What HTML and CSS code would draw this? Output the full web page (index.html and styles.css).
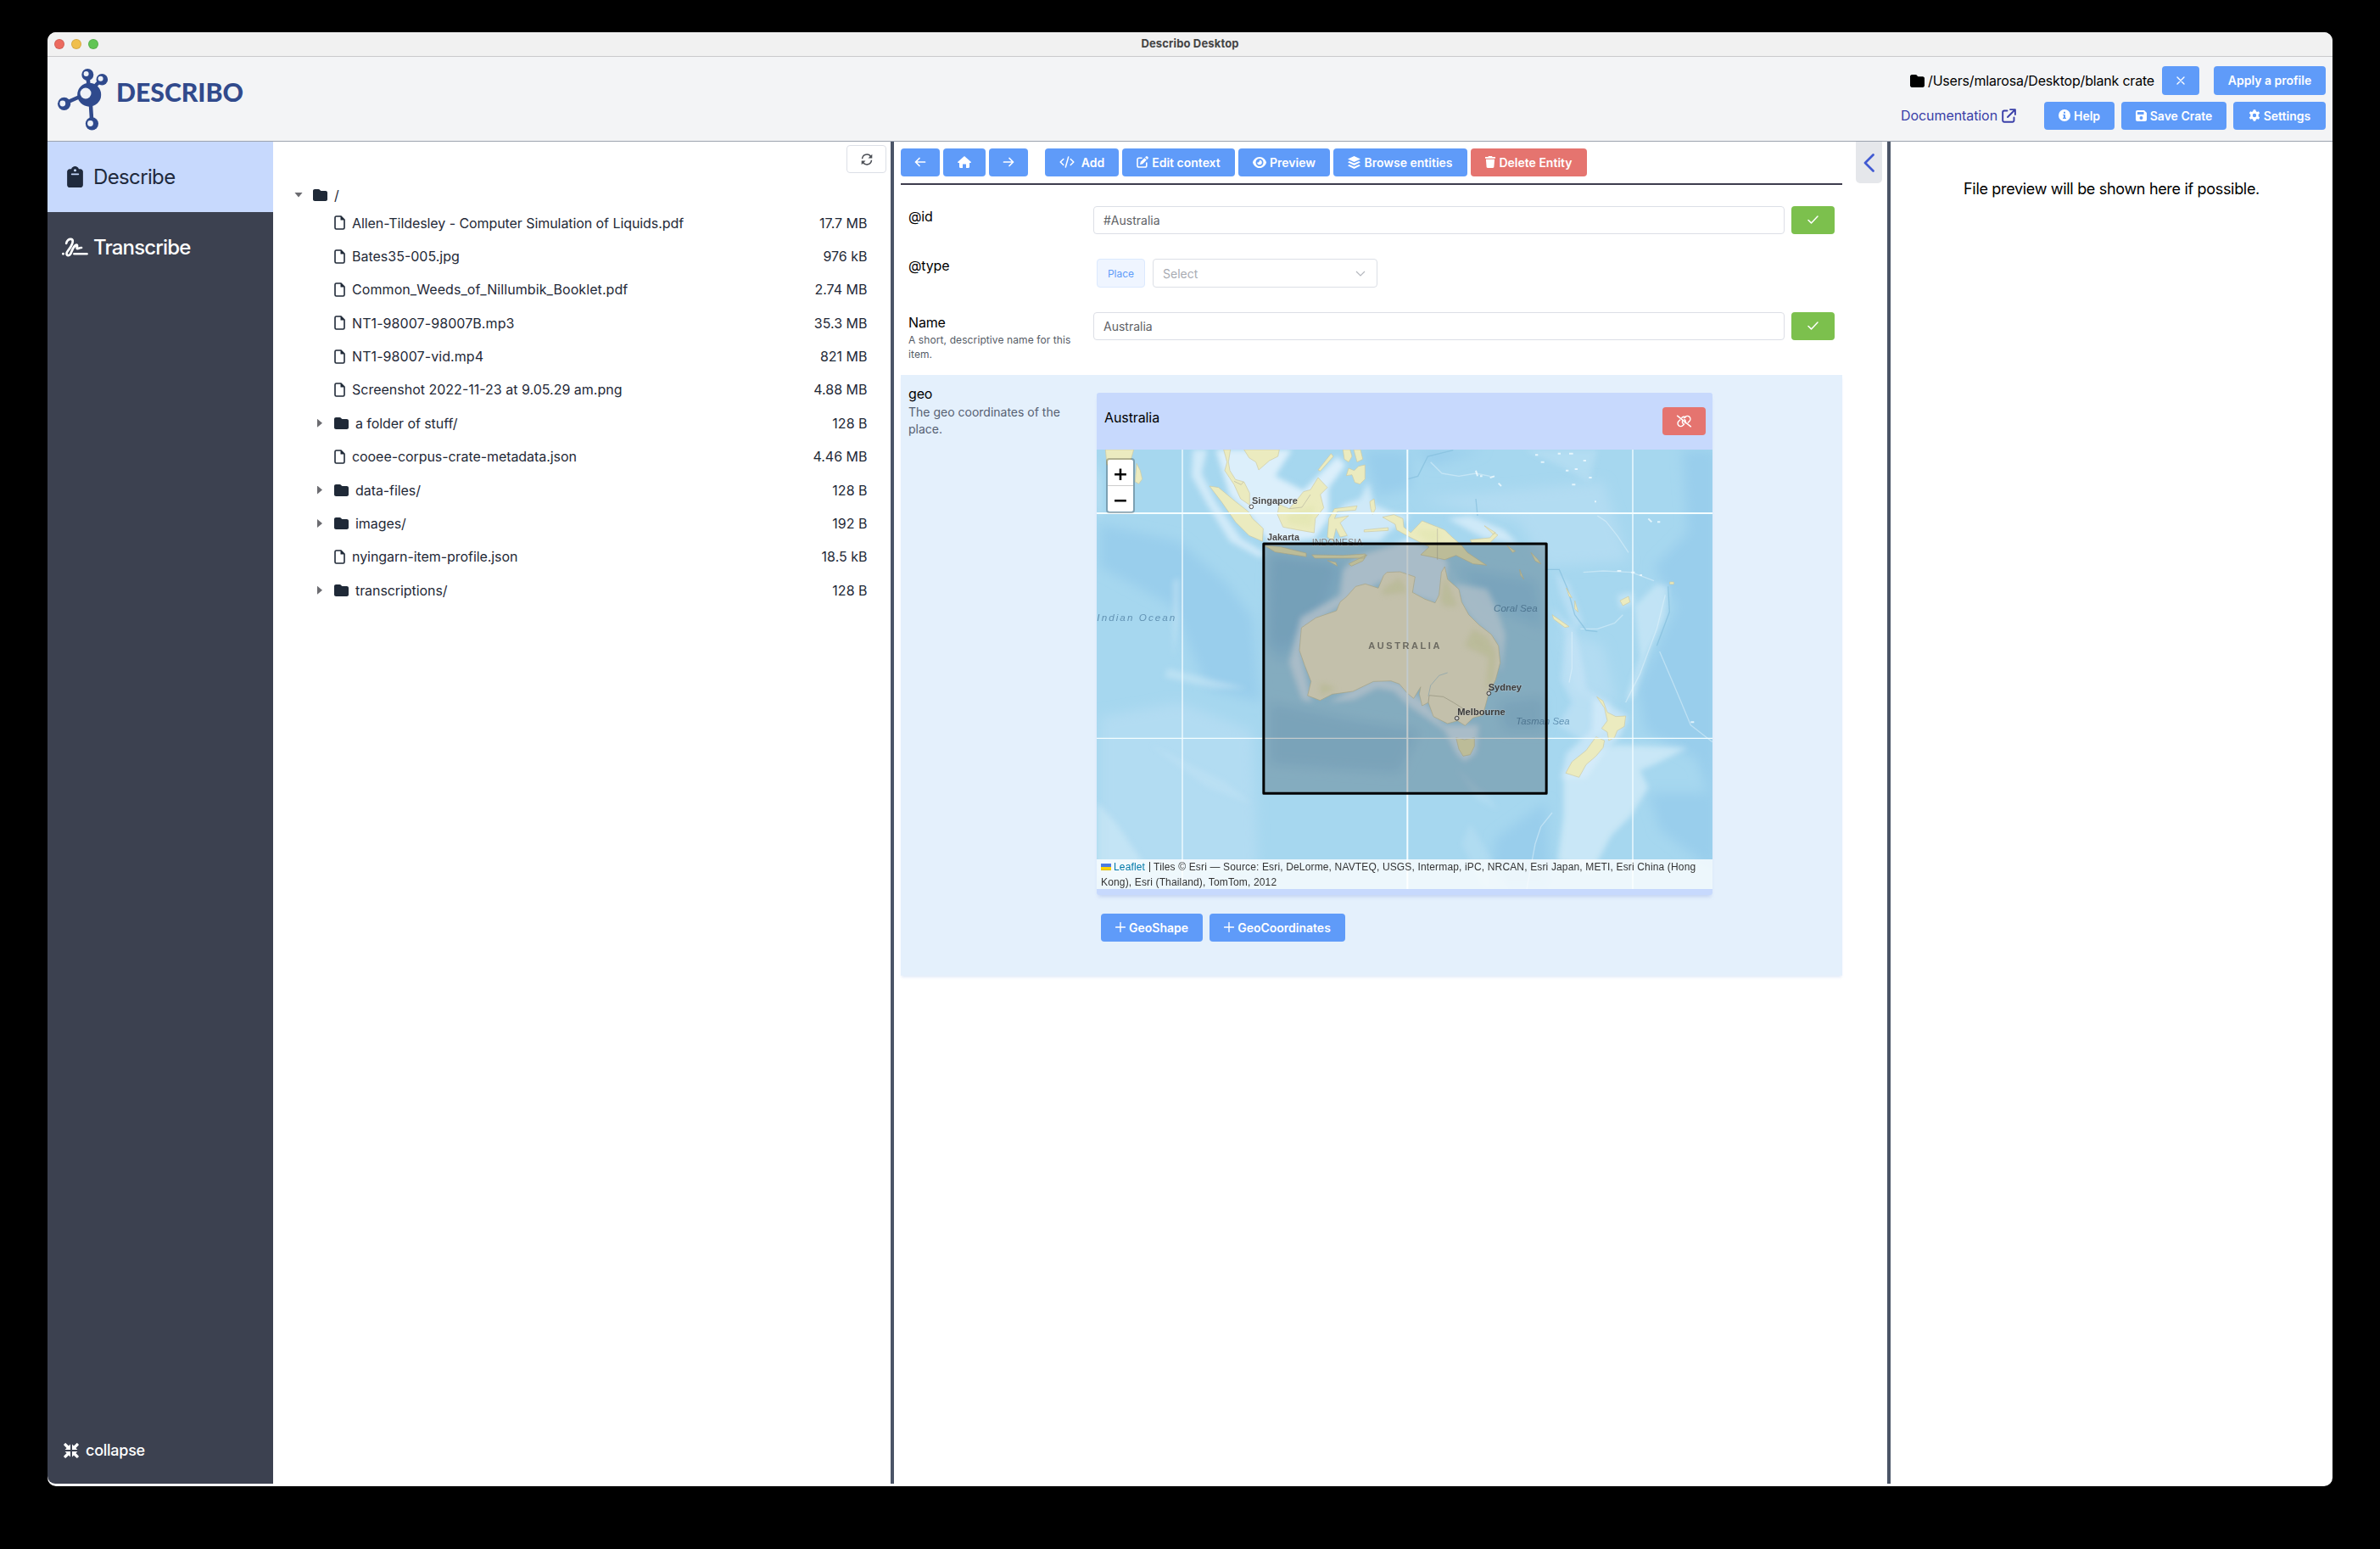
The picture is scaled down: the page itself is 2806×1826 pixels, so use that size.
FILE: index.html
```html
<!DOCTYPE html>
<html lang="en">
<head>
<meta charset="utf-8">
<title>Describo Desktop</title>
<link rel="stylesheet" href="styles.css">
</head>
<body>
<svg class="sprite" aria-hidden="true">
  <symbol id="i-folder" viewBox="0 32 512 448" preserveAspectRatio="none"><path d="M64 480H448c35.300 0 64-28.700 64-64V160c0-35.300-28.700-64-64-64H288c-10.100 0-19.600-4.700-25.600-12.800L243.200 57.600C231.100 41.500 212.100 32 192 32H64C28.700 32 0 60.700 0 96V416c0 35.300 28.700 64 64 64z"/></symbol>
  <symbol id="i-file" viewBox="0 0 13 17"><path d="M2.500 1H8l4 4v9.500a1.500 1.500 0 0 1-1.500 1.500h-8A1.500 1.500 0 0 1 1 14.500v-12A1.500 1.500 0 0 1 2.500 1z" fill="none" stroke="currentColor" stroke-width="1.600"/><path d="M7.500 1v4.500H12L8 1z"/></symbol>
  <symbol id="i-clipboard" viewBox="0 0 384 512"><path fill-rule="evenodd" d="M192 0c-41.800 0-77.400 26.700-90.500 64H64C28.700 64 0 92.700 0 128V448c0 35.300 28.700 64 64 64H320c35.300 0 64-28.700 64-64V128c0-35.300-28.700-64-64-64H282.500C269.400 26.700 233.800 0 192 0zm0 64a32 32 0 1 1 0 64 32 32 0 1 1 0-64zM112 176H272a16 16 0 0 1 0 32H112a16 16 0 0 1 0-32z"/></symbol>
  <symbol id="i-signature" viewBox="0 0 30 22"><g fill="none" stroke="currentColor" stroke-width="2.600" stroke-linecap="round" stroke-linejoin="round"><path d="M5 6.500c.5-3.200 3-5.200 5.500-4.800C13.500 2.200 12.500 6.500 10 10.500 8 14 5.300 16 5.300 18.300c.2 2.500 3.300 2.600 4.500.3C11.200 16 12 11.500 15.500 8.700c1.500-1.200 2.300-.2 1.900 1.300-.4 1.400-.9 2.900.9 2.500 1.400-.3 2.300-1.300 4-1"/><path d="M14 18.500H28.500"/></g><circle cx="1.400" cy="18.500" r="1.400"/></symbol>
  <symbol id="i-refresh" viewBox="0 0 14 14"><g fill="none" stroke="currentColor" stroke-width="1.500"><path d="M1.500 6.300A5.500 5.500 0 0 1 11.800 4"/><path d="M12.500 7.700A5.500 5.500 0 0 1 2.200 10"/></g><path d="M13.300.8v4.800H8.500zM.7 13.200V8.400h4.800z"/></symbol>
  <symbol id="i-left" viewBox="0 0 14 14"><path d="M12.500 7H1.500M6 2.500 1.500 7 6 11.500" fill="none" stroke="currentColor" stroke-width="1.700" stroke-linecap="round" stroke-linejoin="round"/></symbol>
  <symbol id="i-right" viewBox="0 0 14 14"><path d="M1.500 7h11M8 2.500 12.500 7 8 11.500" fill="none" stroke="currentColor" stroke-width="1.700" stroke-linecap="round" stroke-linejoin="round"/></symbol>
  <symbol id="i-home" viewBox="0 0 16 14"><path d="M8 0 .3 6.700c-.5.500-.2 1.300.5 1.300H2v4.800c0 .7.500 1.200 1.200 1.200H6V9.500h4V14h2.800c.7 0 1.200-.5 1.200-1.200V8h1.200c.7 0 1-.8.500-1.300z"/></symbol>
  <symbol id="i-code" viewBox="0 0 18 14"><path d="M4.800 3.500 1.200 7l3.600 3.500M13.200 3.500 16.800 7l-3.600 3.500M10.700 1 7.300 13" fill="none" stroke="currentColor" stroke-width="1.500" stroke-linecap="round" stroke-linejoin="round"/></symbol>
  <symbol id="i-edit" viewBox="0 0 14 14"><path d="M6 2.200H2.800A1.800 1.800 0 0 0 1 4v7.200A1.800 1.800 0 0 0 2.800 13H10a1.800 1.800 0 0 0 1.800-1.800V8" fill="none" stroke="currentColor" stroke-width="1.600" stroke-linecap="round"/><path d="m11 .6c.6-.6 1.300-.6 1.900 0l.5.500c.6.600.6 1.300 0 1.900l-.9.900L10.100 1.500zM9.400 2.200l2.400 2.400-4.600 4.600-3.200.8.800-3.200z"/></symbol>
  <symbol id="i-eye" viewBox="0 0 16 13"><path fill-rule="evenodd" d="M8 0C3.600 0 .9 3.600.1 6.100a1 1 0 0 0 0 .8C.9 9.400 3.600 13 8 13s7.100-3.600 7.900-6.100a1 1 0 0 0 0-.8C15.100 3.600 12.400 0 8 0zm0 2a4.500 4.500 0 1 0 0 9 4.500 4.500 0 0 0 0-9z"/><path d="M8 3.700A2.800 2.800 0 1 1 5.200 6.500C6.500 6.900 8.300 5.500 8 3.700z"/></symbol>
  <symbol id="i-layers" viewBox="0 0 15 15"><path d="M7.500 0 15 3.500 7.500 7 0 3.500z"/><path d="M1.800 6 7.500 8.600 13.200 6 15 7.300 7.500 10.900 0 7.300z"/><path d="m1.800 10 5.700 2.600L13.200 10l1.800 1.300-7.500 3.600L0 11.300z"/></symbol>
  <symbol id="i-trash" viewBox="0 0 12 14"><path d="M4 0h4l.6 1H12v1.800H0V1h3.400zM.9 3.700h10.200l-.7 9.100c0 .7-.6 1.200-1.300 1.200H2.900c-.7 0-1.300-.5-1.300-1.200z"/></symbol>
  <symbol id="i-info" viewBox="0 0 14 14"><path fill-rule="evenodd" d="M7 0a7 7 0 1 0 0 14A7 7 0 0 0 7 0zM6 2.800h2v2H6zM5.200 6H8v3.800h1v1.300H5V9.800h1V7.300h-.8z"/></symbol>
  <symbol id="i-save" viewBox="0 0 13 13"><path fill-rule="evenodd" d="M2 0h8l3 3v8a2 2 0 0 1-2 2H2a2 2 0 0 1-2-2V2a2 2 0 0 1 2-2zm0 2v3h7.500V2zm4.500 5a2 2 0 1 0 0 4 2 2 0 0 0 0-4z"/></symbol>
  <symbol id="i-gear" viewBox="0 0 14 14"><path fill-rule="evenodd" d="M5.700.2h2.600l.4 1.900 1.300.8 1.900-.7 1.300 2.300-1.500 1.300v2.400l1.500 1.300-1.300 2.300-1.900-.7-1.300.8-.4 1.900H5.700l-.4-1.900-1.300-.8-1.900.7L.8 9.500l1.500-1.300V5.800L.8 4.500l1.300-2.300 1.900.7 1.300-.8zM7 4.800a2.200 2.200 0 1 0 0 4.400 2.200 2.200 0 0 0 0-4.400z"/></symbol>
  <symbol id="i-external" viewBox="0 0 17 17"><path d="M6.500 2.500H3A1.800 1.800 0 0 0 1.200 4.300V14A1.800 1.800 0 0 0 3 15.800h9.700a1.800 1.800 0 0 0 1.800-1.800v-3.500M10 1.100h5.900V7M15.500 1.500 7 10" fill="none" stroke="currentColor" stroke-width="1.900" stroke-linecap="round" stroke-linejoin="round"/></symbol>
  <symbol id="i-x" viewBox="0 0 10 10"><path d="m1 1 8 8M9 1 1 9" fill="none" stroke="currentColor" stroke-width="1.400" stroke-linecap="round"/></symbol>
  <symbol id="i-check" viewBox="0 0 13 10"><path d="m1 5.500 3.500 3.400L12 1" fill="none" stroke="currentColor" stroke-width="1.500" stroke-linecap="round" stroke-linejoin="round"/></symbol>
  <symbol id="i-plus" viewBox="0 0 12 12"><path d="M6 .6v10.800M.6 6h10.800" fill="none" stroke="currentColor" stroke-width="1.400" stroke-linecap="round"/></symbol>
  <symbol id="i-unlink" viewBox="0 0 18 14"><g fill="none" stroke="currentColor" stroke-width="1.400" stroke-linecap="round"><path d="M1.500 1 16.500 13"/><path d="M6.500 3.200C7.500 1.800 9.500 1.500 10.700 2.500M8 9.800c-1-1-1.200-2.400-.7-3.500"/><path d="M9.500 5.300c1.400 1 1.400 2.700.6 3.800"/><path d="M4.500 5.500 3 7a3.300 3.300 0 0 0 4.600 4.800L9 10.500M9 3.500l1.400-1.300A3.300 3.300 0 0 1 15 7l-1.500 1.500"/></g></symbol>
  <symbol id="i-compress" viewBox="0 0 18 18"><path id="arm" d="M8 8H1.600L3.600 6 .4 2.800C0 2.400 0 2 .4 1.600L1.600.4C2 0 2.400 0 2.800.4L6 3.600l2-2z"/><use href="#arm" transform="matrix(-1 0 0 1 18 0)"/><use href="#arm" transform="matrix(1 0 0 -1 0 18)"/><use href="#arm" transform="rotate(180 9 9)"/></symbol>
</svg>

<div class="window">
  <header class="titlebar">
    <span class="light red"></span><span class="light yellow"></span><span class="light green"></span>
    <h1 class="window-title">Describo Desktop</h1>
  </header>

  <div class="topbar">
    <svg class="logo" viewBox="0 0 230 80">
      <g stroke="#314a8c" stroke-width="4.500"><path d="M43.200 37 41.300 16M43.200 37 57 22M43.200 37 14 50M44 37 46.400 74" /></g>
      <g fill="#2f4a8d"><circle cx="43.200" cy="39.700" r="14"/><circle cx="41.300" cy="16" r="7"/><circle cx="58.300" cy="21.700" r="6.800"/><circle cx="13.600" cy="50.300" r="7.600"/><circle cx="46.400" cy="73.800" r="7.600"/></g>
      <g fill="#eef2f8"><circle cx="39" cy="38" r="6.500"/><circle cx="39.600" cy="15" r="3"/><circle cx="56.600" cy="20.700" r="3"/><circle cx="11.800" cy="50" r="3.400"/><circle cx="44.500" cy="73.500" r="3.400"/></g>
      <text class="logo-text" x="75" y="48" textLength="150" lengthAdjust="spacingAndGlyphs">DESCRIBO</text>
    </svg>
    <div class="top-actions">
      <div class="top-row">
        <svg class="ic path-folder"><use href="#i-folder"/></svg>
        <span class="path">/Users/mlarosa/Desktop/blank crate</span>
        <button class="btn w44"><svg class="ic s10"><use href="#i-x"/></svg></button>
        <button class="btn w132">Apply a profile</button>
      </div>
      <div class="top-row second">
        <a class="docs"><span>Documentation</span><svg class="ic s17"><use href="#i-external"/></svg></a>
        <button class="btn w83"><svg class="ic s14"><use href="#i-info"/></svg><span>Help</span></button>
        <button class="btn w124"><svg class="ic s13"><use href="#i-save"/></svg><span>Save Crate</span></button>
        <button class="btn w109"><svg class="ic s14"><use href="#i-gear"/></svg><span>Settings</span></button>
      </div>
    </div>
  </div>

  <div class="body">
    <nav class="sidebar">
      <a class="nav active"><svg class="ic nav-clip"><use href="#i-clipboard"/></svg><span>Describe</span></a>
      <a class="nav"><svg class="ic nav-sign"><use href="#i-signature"/></svg><span>Transcribe</span></a>
      <a class="collapse"><svg class="ic s18"><use href="#i-compress"/></svg><span>collapse</span></a>
    </nav>

    <section class="files">
      <button class="refresh"><svg class="ic s14"><use href="#i-refresh"/></svg></button>
      <div class="tree">
        <div class="root"><i class="caret down"></i><svg class="ic tree-folder"><use href="#i-folder"/></svg><span>/</span></div>
        <div class="row"><svg class="ic doc"><use href="#i-file"/></svg><span class="snug">Allen-Tildesley - Computer Simulation of Liquids.pdf</span><span class="size">17.7 MB</span></div>
        <div class="row"><svg class="ic doc"><use href="#i-file"/></svg><span>Bates35-005.jpg</span><span class="size">976 kB</span></div>
        <div class="row"><svg class="ic doc"><use href="#i-file"/></svg><span class="loose">Common_Weeds_of_Nillumbik_Booklet.pdf</span><span class="size">2.74 MB</span></div>
        <div class="row"><svg class="ic doc"><use href="#i-file"/></svg><span class="loose">NT1-98007-98007B.mp3</span><span class="size">35.3 MB</span></div>
        <div class="row"><svg class="ic doc"><use href="#i-file"/></svg><span class="loose">NT1-98007-vid.mp4</span><span class="size">821 MB</span></div>
        <div class="row"><svg class="ic doc"><use href="#i-file"/></svg><span>Screenshot 2022-11-23 at 9.05.29 am.png</span><span class="size">4.88 MB</span></div>
        <div class="row dir"><i class="caret"></i><svg class="ic tree-folder"><use href="#i-folder"/></svg><span class="snug">a folder of stuff/</span><span class="size">128 B</span></div>
        <div class="row"><svg class="ic doc"><use href="#i-file"/></svg><span class="snug">cooee-corpus-crate-metadata.json</span><span class="size">4.46 MB</span></div>
        <div class="row dir"><i class="caret"></i><svg class="ic tree-folder"><use href="#i-folder"/></svg><span class="snug">data-files/</span><span class="size">128 B</span></div>
        <div class="row dir"><i class="caret"></i><svg class="ic tree-folder"><use href="#i-folder"/></svg><span class="snug">images/</span><span class="size">192 B</span></div>
        <div class="row"><svg class="ic doc"><use href="#i-file"/></svg><span class="snug">nyingarn-item-profile.json</span><span class="size">18.5 kB</span></div>
        <div class="row dir"><i class="caret"></i><svg class="ic tree-folder"><use href="#i-folder"/></svg><span class="snug">transcriptions/</span><span class="size">128 B</span></div>
      </div>
    </section>

    <main class="editor">
      <div class="entity">
        <div class="toolbar">
          <button class="btn w46"><svg class="ic s14"><use href="#i-left"/></svg></button>
          <button class="btn w50"><svg class="ic home"><use href="#i-home"/></svg></button>
          <button class="btn w46 gap-after"><svg class="ic s14"><use href="#i-right"/></svg></button>
          <button class="btn w87 wide-gap"><svg class="ic code"><use href="#i-code"/></svg><span>Add</span></button>
          <button class="btn w133"><svg class="ic s14"><use href="#i-edit"/></svg><span>Edit context</span></button>
          <button class="btn w108"><svg class="ic eye"><use href="#i-eye"/></svg><span>Preview</span></button>
          <button class="btn w158"><svg class="ic s15"><use href="#i-layers"/></svg><span>Browse entities</span></button>
          <button class="btn w137 danger"><svg class="ic trash"><use href="#i-trash"/></svg><span>Delete Entity</span></button>
        </div>

        <div class="prop id">
          <div class="label"><div class="name">@id</div></div>
          <div class="input">#Australia</div>
          <button class="btn ok"><svg class="ic check"><use href="#i-check"/></svg></button>
        </div>
        <div class="prop type">
          <div class="label"><div class="name">@type</div></div>
          <span class="tag">Place</span>
          <div class="select"><span>Select</span><svg class="chev" viewBox="0 0 12 7"><path d="m1 1 5 5 5-5" fill="none" stroke="#b4b7bd" stroke-width="1.200"/></svg></div>
        </div>
        <div class="prop named">
          <div class="label"><div class="name">Name</div><div class="hint">A short, descriptive name for this item.</div></div>
          <div class="input">Australia</div>
          <button class="btn ok"><svg class="ic check"><use href="#i-check"/></svg></button>
        </div>

        <div class="geo">
          <div class="label"><div class="name">geo</div><div class="hint big">The geo coordinates of the place.</div></div>
          <div class="geo-value">
            <div class="card">
              <div class="card-head"><span>Australia</span><button class="btn danger unlink"><svg class="ic un"><use href="#i-unlink"/></svg></button></div>
              <div class="map">
                <svg class="tiles" viewBox="9 6 2178 1554">
                  <defs>
                    <filter id="soft" x="-20%" y="-20%" width="140%" height="140%"><feGaussianBlur stdDeviation="20"/></filter>
                    <filter id="soft2" x="-20%" y="-20%" width="140%" height="140%"><feGaussianBlur stdDeviation="9"/></filter>
                    <filter id="soft3" x="-20%" y="-20%" width="140%" height="140%"><feGaussianBlur stdDeviation="1.500"/></filter>
                  </defs>
                  <rect x="9" y="6" width="2178" height="1554" fill="#a6d7ef"/>
                  <g filter="url(#soft)">
                    <path fill="#99ceec" d="M950 6H1110L1120 140 1000 170zM20 270 300 330 470 480 560 600 590 900 400 850 280 560 20 420zM1120 6 1380 6 1200 60zM2080 6H2200V1300L2130 1100 1950 1000 1920 850 2060 560 1980 420 2100 300zM1420 1380 1600 1250 1610 1560H1400zM1960 1220H2200V1500L2000 1350zM620 370 900 420 840 560 660 760 610 700zM1280 420 1560 470 1590 640 1400 560z"/>
                    <path fill="#b2dcf2" d="M1150 180 1800 120 1890 400 1600 420 1500 260zM20 950 300 900 560 1000 580 1500 20 1500zM1650 640 1800 700 1850 900 1700 860z"/>
                    <path fill="#8dc2e2" opacity=".5" d="M620 380 860 400 800 580 680 700 620 690zM620 900 900 960 1150 1000 1080 1150 620 1120zM1430 900 1590 880V1000H1450z"/>
                  </g>
                  <g filter="url(#soft2)" fill="#dceffb">
                    <path d="M430 6H700L640 100 740 150 860 30 890 60 830 140 830 250 780 320 620 340 560 250 480 170z"/>
                    <path d="M350 6 400 6 380 90 430 190 520 320 600 370 590 390 480 330 400 200 345 100z" opacity=".8"/>
                    <path d="M940 380 1070 340 1110 320 1200 360 1250 400 1240 560 1120 520 1020 470 900 540 780 620 730 720 770 900 735 890 690 760 730 600 870 520 880 430z" opacity=".85"/>
                    <path d="M1250 400 1280 480 1390 500 1420 560 1455 660 1440 800 1425 690 1340 610 1300 560z" opacity=".75"/>
                    <path d="M830 900 900 860 1000 810 1080 830 1170 900 1240 980 1360 980 1350 1080 1310 1110 1280 1080 1240 1000 1110 910 1060 860 1000 850 920 890z" opacity=".85"/>
                    <path d="M880 200 940 180 970 120 990 200 1060 230 1120 240 1040 300 1010 330 900 330 840 260zM1250 250 1330 240 1450 290 1500 340 1380 320z" opacity=".75"/>
                    <path d="M1630 440 1680 480 1730 620 1700 640 1650 520zM1610 560 1700 640 1730 780 1740 850 1830 900 1810 1000 1720 1030 1640 980 1690 900 1650 820 1670 660z" opacity=".35"/>
                    <path d="M1990 480 2030 490 2020 600 1960 720 1910 880 1880 890 1930 740 1910 560zM1850 520 1905 510 1910 550 1860 570z" opacity=".5"/>
                    <path d="M1660 1160 1750 1080 1850 1050 2100 1060 1980 1120 1930 1140 1960 1200 1900 1300 1830 1370 1760 1500 1640 1460 1660 1300z" opacity=".65"/>
                    <path d="M1765 880 1840 920 1890 950 1860 1020 1800 1080 1740 1170 1650 1170 1670 1080 1760 1000z" opacity=".6"/>
                    <path d="M9 1250 80 1330 190 1490 140 1470 120 1540 9 1520zM9 30 24 120 24 260 9 200zM280 470 300 460 300 600 280 740zM260 780 420 820 540 850 420 850 250 810z" opacity=".4"/>
                    <path d="M200 1050 460 1180 560 1260 400 1200zM1280 1130 1390 1230 1430 1280 1350 1240zM1330 1330 1470 1560 1380 1560 1300 1400z" opacity=".2"/>
                    <path d="M1520 6 1780 6 1750 120 1640 60z" opacity=".25"/>
                  </g>
                  <g fill="none" stroke="#e3f4fc" stroke-width="4" opacity=".5" stroke-linejoin="round" filter="url(#soft3)">
                    <path d="M1190 50 1230 90 1290 100 1350 90 1400 100M1780 240 1810 260 1850 310 1890 370M1730 440 1800 435 1900 440 1980 470M1720 640 1780 640 1840 620 1870 590M1690 650 1690 780 1680 830M2000 720 2060 860 2110 980 2187 1040"/>
                    <path d="M1620 1290 1580 1340 1560 1400 1530 1560M2020 520 1990 640 1930 800 1880 900" />
                  </g>
                  <g fill="none" stroke="#f2fbff" stroke-width="6" opacity=".8">
                    <path d="M1560 25h10M1580 50h12M1640 20h10M1680 20h14M1700 75h10M1730 45h10M1400 105l16-5M1430 125l10 10M1690 130h12M1750 105h10M1668 80h10M1770 190h6M1350 80l6 20M1365 100h8M1960 250l12 12M1992 262h10M1850 435h14M1900 440h12M1930 450h8M2110 970h12"/>
                  </g>
                  <path fill="none" stroke="#85bfdd" stroke-width="4" opacity=".7" filter="url(#soft3)" d="M1110 110 1145 100 1180 30 1270 8M1350 180 1356 240M1600 430 1645 430 1675 500 1700 590 1740 645 1780 650M2030 490 2035 580 1990 700"/>
                  <g fill="#ebebbf" stroke="#cdc9a2" stroke-width="2" stroke-linejoin="round">
                    <path d="M40 6H140L125 60 45 60zM150 55 163 80 170 110 158 127 145 120z"/>
                    <path d="M458 6H482L475 50 480 80 500 112 530 120 550 160 550 202 518 180 495 130 462 80 470 50z"/>
                    <path d="M530 6H655L650 30 620 45 582 78 572 50 548 35z"/>
                    <path d="M408 135 440 140 500 190 545 225 560 250 598 285 595 330 548 310 500 262 450 190z"/>
                    <path d="M792 105 825 140 800 165 812 212 782 250 778 300 720 290 668 280 648 235 655 200 690 215 720 180 740 155 765 148z"/>
                    <path d="M880 6 905 6 912 30 900 50 885 40zM918 6H942L950 40 930 50zM838 20 846 30 800 82 792 78zM900 72 920 80 935 65 958 60 958 110 940 128 922 122 912 95 892 98z"/>
                    <path d="M830 250 850 215 930 205 925 220 860 225 850 250 900 240 870 265 895 310 870 315 855 285 845 330 825 315 828 280zM975 190 990 180 995 215 985 235 978 215zM955 290 1040 282 1040 292 955 297z"/>
                    <path d="M602 345 660 350 750 372 750 385 640 368zM770 378 880 380 960 375 955 390 780 390zM825 398 855 405 860 418zM900 410 940 390 965 378 950 400 910 418z"/>
                    <path d="M1020 245 1060 236 1092 250 1095 280 1120 300 1160 258 1240 290 1260 310 1300 345 1320 370 1388 415 1340 410 1280 380 1240 395 1165 380 1155 378 1185 350 1110 312 1070 290 1065 270z"/>
                    <path d="M1330 325 1400 318 1415 300 1428 308 1400 335 1335 335zM1380 275 1420 300 1412 306zM1460 345 1490 365 1480 370zM1545 370 1570 395 1580 410 1560 400zM1505 430 1520 465 1508 450zM1670 495 1690 530 1680 525zM1700 540 1712 580 1700 570zM1620 590 1680 632 1665 635 1625 605zM1860 540 1890 525 1895 545 1870 558zM2036 474h14v8h-14z"/>
                    <path d="M1240 420 1250 465 1290 500 1300 545 1325 590 1360 625 1405 660 1430 700 1436 760 1420 820 1395 870 1375 945 1340 955 1312 982 1285 965 1250 975 1200 950 1182 900 1160 912 1150 870 1155 845 1130 886 1108 868 1080 835 1050 824 988 826 915 861 842 871 799 893 755 876 767 826 745 770 726 716 733 636 784 601 857 576 870 545 893 526 925 490 959 481 1005 496 1024 451 1035 440 1082 438 1135 456 1126 511 1170 535 1206 548 1220 520 1228 440z" fill="#f4f0d6"/>
                    <path d="M1280 1025 1310 1032 1345 1025 1345 1055 1330 1085 1305 1090 1290 1065z"/>
                    <path d="M1778 880 1800 895 1815 935 1845 950 1880 948 1875 985 1850 1000 1840 1025 1820 1035 1815 1005 1795 992 1815 965 1805 920z"/>
                    <path d="M1775 1022 1805 1035 1800 1060 1775 1090 1740 1120 1715 1165 1668 1150 1690 1110 1740 1070z"/>
                  </g>
                  <g filter="url(#soft2)" fill="#dfe4ac" opacity=".5"><path d="M1240 450 1260 500 1285 560 1240 560 1225 540zM1340 640 1390 670 1420 720 1415 820 1385 860 1395 740 1310 700zM1020 500 1080 460 1110 510 1020 520zM800 830 860 850 800 875zM680 240 780 200 770 280 690 270zM1130 290 1220 290 1220 330 1180 330z"/></g>
                  <g fill="none" stroke="#c3c1a6" stroke-width="2.500"><path d="M1214 285V395M690 215 735 210 765 165M495 118 520 130 528 120M1182 900 1185 875 1235 880 1270 900 1310 925"/><path d="M1182 878 1190 840 1220 805 1250 795" stroke="#b4d0d6"/></g>
                  <g stroke="#f3fdff"><path stroke-width="4" d="M312 6V1560M1905 6V1560M9 1027H2187"/><path stroke-width="6" d="M1108 6V1560M9 231H2187"/></g>
                  <g fill="#fff" stroke="#444" stroke-width="3"><circle cx="556" cy="208" r="7"/><circle cx="1396" cy="868" r="7"/><circle cx="1283" cy="956" r="7"/></g>
                  <g class="city">
                    <text x="558" y="197" textLength="162" lengthAdjust="spacingAndGlyphs">Singapore</text>
                    <text x="612" y="326" textLength="114" lengthAdjust="spacingAndGlyphs">Jakarta</text>
                    <text x="1394" y="858" textLength="118" lengthAdjust="spacingAndGlyphs">Sydney</text>
                    <text x="1285" y="944" textLength="169" lengthAdjust="spacingAndGlyphs">Melbourne</text>
                    <text class="country" x="970" y="710" textLength="252">AUSTRALIA</text>
                    <text class="indo" x="770" y="346" textLength="180" lengthAdjust="spacingAndGlyphs">INDONESIA</text>
                    <text class="sea" x="10" y="611" textLength="276">Indian Ocean</text>
                    <text class="sea" x="1413" y="579" textLength="155" lengthAdjust="spacingAndGlyphs">Coral Sea</text>
                    <text class="sea" x="1492" y="978" textLength="190" lengthAdjust="spacingAndGlyphs">Tasman Sea</text>
                  </g>
                  <rect x="599.500" y="339" width="1000" height="883" fill="#000" fill-opacity=".2" stroke="#000" stroke-width="9" stroke-linejoin="round"/>
                </svg>
                <div class="zoom"><span>+</span><span>−</span></div>
                <div class="credit">
                  <div class="credit-line"><svg class="flag" viewBox="0 0 12 8"><path fill="#4c7be1" d="M0 0h12v4H0z"/><path fill="#ffd500" d="M0 4h12v3H0z"/><path fill="#e0bc00" d="M0 7h12v1H0z"/></svg><a>Leaflet</a><i class="bar"></i><span>Tiles © Esri — Source: Esri, DeLorme, NAVTEQ, USGS, Intermap, iPC, NRCAN, Esri Japan, METI, Esri China (Hong</span></div>
                  <div class="credit-line">Kong), Esri (Thailand), TomTom, 2012</div>
                </div>
              </div>
            </div>
            <div class="add-row">
              <button class="btn w120"><svg class="ic s12"><use href="#i-plus"/></svg><span>GeoShape</span></button>
              <button class="btn w160"><svg class="ic s12"><use href="#i-plus"/></svg><span>GeoCoordinates</span></button>
            </div>
          </div>
        </div>
      </div>
      <div class="drawer-tab"><svg class="tab-chev" viewBox="0 0 13 22"><path d="M11.500 1.500 2 11l9.500 9.500" fill="none" stroke="#415ad2" stroke-width="2.700" stroke-linecap="round" stroke-linejoin="round"/></svg></div>
    </main>

    <aside class="preview">File preview will be shown here if possible.</aside>
  </div>
</div>
</body>
</html>
```
FILE: styles.css
```css
* { box-sizing: border-box; }
body {
  margin: 0;
  height: 1826px;
  background: #000;
  font-family: Inter, "Liberation Sans", sans-serif;
  font-size: 16px;
  color: #000;
  overflow: hidden;
}
.sprite { position: absolute; width: 0; height: 0; }
button { font: inherit; border: 0; padding: 0; margin: 0; }
.ic { fill: currentColor; flex: none; display: block; }
.s10 { width: 10px; height: 10px; }
.s12 { width: 12px; height: 12px; }
.s13 { width: 13px; height: 13px; }
.s14 { width: 14px; height: 14px; }
.s15 { width: 15px; height: 15px; }
.s17 { width: 17px; height: 17px; }
.s18 { width: 18px; height: 18px; }

/* Window frame */
.window {
  width: 2694px;
  height: 1714px;
  margin: 38px 0 0 56px;
  background: #fff;
  border-radius: 10px;
  overflow: hidden;
  display: flex;
  flex-direction: column;
}
.titlebar {
  height: 29px;
  flex: none;
  background: #f1f1f1;
  border-bottom: 1px solid #c9c9cb;
  display: flex;
  align-items: center;
  gap: 8px;
  padding-left: 8px;
  position: relative;
}
.light { width: 12px; height: 12px; border-radius: 50%; border: 1px solid rgba(0,0,0,.1); }
.red { background: #ec6a5e; }
.yellow { background: #f0bf4c; }
.green { background: #61c554; }
.window-title {
  margin: 0;
  position: absolute;
  inset: 0;
  text-align: center;
  font-size: 13px;
  line-height: 27px;
  letter-spacing: .14px;
  font-weight: 700;
  color: #444;
}

/* Header */
.topbar {
  height: 100px;
  flex: none;
  background: #f3f4f6;
  border-bottom: 1px solid #9ca3af;
  display: flex;
  justify-content: space-between;
  padding: 5px 8px 0 6px;
}
.logo { width: 230px; height: 80px; overflow: visible; }
.logo-text { font: 900 30px Lato, sans-serif; fill: #314a8c; }
.top-actions { display: flex; flex-direction: column; gap: 8px; padding-top: 6px; }
.top-row { display: flex; justify-content: flex-end; align-items: center; height: 34px; }
.top-row.second { gap: 8px; height: 33px; }
.path-folder { width: 17px; height: 15px; margin-right: 4px; }
.path { margin-right: 9px; letter-spacing: -.19px; }
.top-row .w132 { margin-left: 17px; }
.docs { display: flex; align-items: center; gap: 5px; color: #3a3fa8; margin-right: 25px; letter-spacing: -.08px; }
.docs span { padding-bottom: 1px; }

/* Buttons */
.btn {
  height: 33px;
  border-radius: 4px;
  background: #5f9bf9;
  color: #fff;
  font-size: 14px;
  font-weight: 600;
  display: flex;
  align-items: center;
  justify-content: center;
  gap: 4px;
  white-space: nowrap;
  flex: none;
  padding-bottom: 1px;
}
.top-row .w44, .top-row .w132 { height: 34px; }
.btn.danger { background: #e5746f; }
.w44 { width: 44px; } .w132 { width: 132px; } .w83 { width: 83px; } .w124 { width: 124px; } .w109 { width: 109px; }
.w46 { width: 46px; } .w50 { width: 50px; } .w87 { width: 87px; } .w133 { width: 133px; } .w108 { width: 108px; }
.w158 { width: 158px; } .w137 { width: 137px; } .w120 { width: 120px; } .w160 { width: 160px; }

/* Sidebar */
.body { height: 1582px; flex: none; display: flex; }
.sidebar { width: 266px; flex: none; background: #3c4150; color: #fff; display: flex; flex-direction: column; border-bottom-left-radius: 9px; }
.nav { height: 83px; display: flex; align-items: center; font-size: 24px; font-weight: 500; letter-spacing: -.85px; }
.nav.active { background: #c7d9fd; color: #1f2a3d; font-weight: 400; letter-spacing: -.64px; }
.nav-clip { width: 19px; height: 25px; margin: 0 12px 0 23px; }
.nav-sign { width: 31px; height: 23px; margin: 0 6px 0 17px; }
.collapse { margin: auto 0 28px 19px; display: flex; align-items: center; gap: 8px; font-size: 18px; font-weight: 500; line-height: 22px; letter-spacing: -.25px; }

/* File tree */
.files { width: 728px; flex: none; display: flex; flex-direction: column; color: #1f2937; }
.refresh { align-self: flex-end; width: 47px; height: 33px; margin: 4px 5px 0 0; border: 1px solid #dcdfe6; border-radius: 4px; background: #fff; color: #4b4e55; display: flex; align-items: center; justify-content: center; }
.tree { padding: 12px 28px 0 72px; }
.root { display: flex; align-items: center; height: 27px; margin-left: -46px; }
.root span { margin-left: 8px; }
.row { display: flex; align-items: center; height: 39.360px; white-space: nowrap; }
.snug { letter-spacing: -.07px; }
.loose { letter-spacing: .08px; }
.doc { width: 13px; height: 17px; margin-right: 8px; }
.size { margin-left: auto; margin-right: -.5px; }
.tree-folder { width: 17px; height: 14px; }
.row .tree-folder { margin-right: 8px; }
.caret { width: 6px; height: 10px; background: #6b6b70; clip-path: polygon(0 0, 100% 50%, 0 100%); }
.row .caret { margin: 0 14px 0 -20px; }
.caret.down { width: 10px; height: 6px; clip-path: polygon(0 0, 100% 0, 50% 100%); margin: 0 12px 0 -1px; }

/* Entity editor */
.editor { width: 1179px; flex: none; border-left: 4px solid #4b5567; border-right: 4px solid #4b5567; display: flex; justify-content: space-between; padding: 0 6px 0 8px; }
.entity { width: 1110px; }
.toolbar { display: flex; gap: 4px; height: 51px; padding-top: 8px; border-bottom: 2px solid #3d3c4d; }
.gap-after { margin-right: 16px; }
.wide-gap { gap: 8px; }
.home { width: 16px; height: 14px; }
.code { width: 18px; height: 14px; }
.eye { width: 16px; height: 13px; }
.trash { width: 12px; height: 14px; }
.prop { display: flex; align-items: flex-start; padding-left: 9px; }
.prop.id { margin-top: 25px; height: 62px; }
.prop.type { height: 63px; }
.prop.named { height: 74px; }
.label { width: 218px; flex: none; }
.name { line-height: 24px; letter-spacing: -.15px; }
.prop.type .name { margin-top: -4px; }
.hint { font-size: 12px; line-height: 16.500px; color: #555b66; width: 205px; margin-top: 1px; letter-spacing: .1px; }
.hint.big { font-size: 14px; line-height: 20px; width: 190px; margin-top: 0; color: #566072; letter-spacing: 0; }
.input { width: 815px; height: 33px; border: 1px solid #dcdfe6; border-radius: 4px; background: #fff; font-size: 14px; line-height: 32px; padding-left: 11px; color: #606266; }
.ok { width: 51px; margin-left: 8px; background: #7cc04d; }
.check { width: 13px; height: 10px; }
.tag { margin-left: 4px; width: 57px; height: 34px; border: 1px solid #dbe9fe; border-radius: 4px; background: #eff5ff; color: #5f9bf9; font-size: 12px; display: flex; align-items: center; justify-content: center; }
.select { margin-left: 9px; width: 265px; height: 34px; border: 1px solid #dcdfe6; border-radius: 4px; display: flex; align-items: center; justify-content: space-between; padding: 0 13px 0 11px; font-size: 14px; color: #a8abb2; }
.chev { width: 12px; height: 7px; }

/* Geo block */
.geo { display: flex; height: 708px; background: #e4f0fc; box-shadow: 0 3px 3px -1px rgba(205,220,245,.6); padding: 10px 0 0 9px; }
.geo-value { margin: 11px 0 0 4px; }
.card { width: 726px; height: 592px; background: #c7d9fd; box-shadow: 0 4px 4px -2px rgba(170,190,235,.6); border-radius: 3px; }
.card-head { height: 67px; display: flex; justify-content: space-between; padding: 17px 8px 0 9px; line-height: 25px; letter-spacing: -.1px; }
.unlink { width: 51px; }
.un { width: 19px; height: 15px; }
.map { position: relative; width: 726px; height: 518px; overflow: hidden; }
.tiles { display: block; width: 726px; height: 518px; }
.city { font: 700 32px "Liberation Sans", sans-serif; fill: #4a4a4a; stroke: #fff; stroke-opacity: .35; stroke-width: 4px; paint-order: stroke; }
.city .country { fill: #87857a; font-size: 33px; stroke: none; }
.city .indo { font-size: 30px; font-weight: 400; fill: #777; }
.city .sea { font-weight: 400; font-style: italic; fill: #6292b3; font-size: 35px; stroke: none; }
.zoom { position: absolute; left: 11px; top: 10px; width: 34px; height: 65px; border: 2px solid rgba(0,0,0,.25); border-radius: 4px; background: #fff; background-clip: padding-box; display: flex; flex-direction: column; font: bold 22px/34px "DejaVu Sans", sans-serif; text-align: center; }
.zoom span { height: 31px; }
.zoom span:first-child { border-bottom: 1px solid #ccc; }
.credit { position: absolute; left: 0; right: 0; bottom: 0; height: 35px; background: rgba(255,255,255,.8); font: 12px/18px "Liberation Sans", sans-serif; padding: 0 5px; color: #333; letter-spacing: .15px; }
.credit-line { display: flex; align-items: center; white-space: nowrap; height: 18px; }
.credit-line a { color: #0078a8; margin-left: 3px; }
.bar { width: 1px; height: 12px; background: #333; margin: 0 4px 0 5px; }
.flag { width: 12px; height: 8px; }
.add-row { display: flex; gap: 8px; margin: 22px 0 0 5px; }
.drawer-tab { width: 31px; height: 49px; background: #e5e7eb; border-radius: 0 0 5px 5px; display: flex; align-items: center; justify-content: center; }
.tab-chev { width: 13px; height: 22px; }
.preview { flex: 1; text-align: center; padding-top: 44px; font-size: 18px; line-height: 24px; letter-spacing: -.32px; }
```
